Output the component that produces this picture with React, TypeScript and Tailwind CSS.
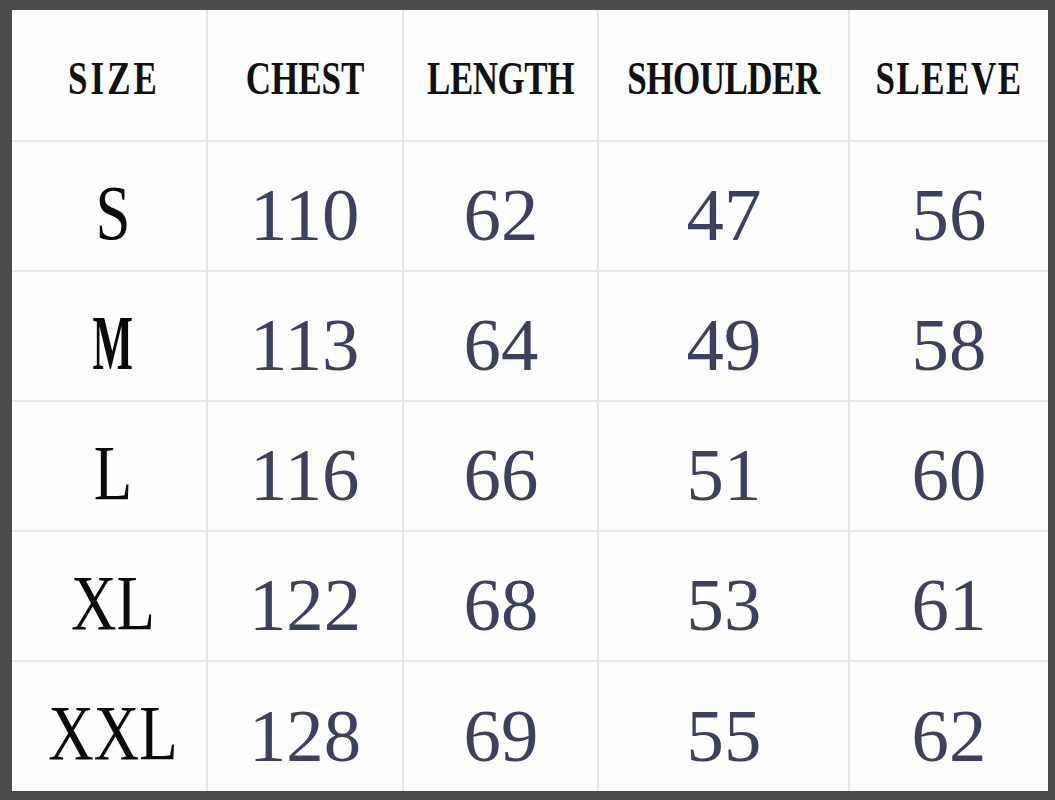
import React from 'react';

const headers: { label: string; track: string; pad: string }[] = [
  { label: 'SIZE', track: 'tracking-[3px]', pad: 'pl-[10px]' },
  { label: 'CHEST', track: 'tracking-[0px]', pad: '' },
  { label: 'LENGTH', track: 'tracking-[-0.5px]', pad: '' },
  { label: 'SHOULDER', track: 'tracking-[-0.5px]', pad: '' },
  { label: 'SLEEVE', track: 'tracking-[1.5px]', pad: '' },
];

const rows: { size: string; values: number[] }[] = [
  { size: 'S', values: [110, 62, 47, 56] },
  { size: 'M', values: [113, 64, 49, 58] },
  { size: 'L', values: [116, 66, 51, 60] },
  { size: 'XL', values: [122, 68, 53, 61] },
  { size: 'XXL', values: [128, 69, 55, 62] },
];

const serif = "font-['Liberation_Serif','Times_New_Roman',serif]";

const Cell: React.FC<{ children: React.ReactNode; className?: string }> = ({ children, className = "" }) => (
  <div className={`bg-[#fdfdfd] flex items-center justify-center leading-none ${className}`}>
    {children}
  </div>
);

export default function App() {
  return (
    <div className="w-[1055px] h-[800px] bg-[#4b4b4b] pl-[12px] pt-[10px] pr-[7px] pb-[9px]">
      <div className="w-full h-full grid grid-cols-[194px_194px_193px_249px_198px] grid-rows-[130px_128px_128px_128px_128px_129px] gap-[2px] bg-[#e7e7e7]">
        {headers.map((h) => (
          <Cell key={h.label} className={`pt-[8px] ${h.pad}`}>
            <span className={`${serif} text-[35px] font-bold text-[#111] scale-y-[1.3] ${h.track}`}>{h.label}</span>
          </Cell>
        ))}
        {rows.map((r) => (
          <React.Fragment key={r.size}>
            <Cell className="pt-[14px] pl-[8px]">
              <span
                className={`${serif} text-[63px] text-[#0a0a0a] scale-y-[1.24] ${r.size === 'M' ? 'font-bold scale-x-[0.68]' : 'font-normal'}`}
              >
                {r.size}
              </span>
            </Cell>
            {r.values.map((v, i) => (
              <Cell key={i} className="pt-[18px]">
                <span className={`${serif} text-[68px] text-[#3d415e] scale-x-[1.1] scale-y-[1.08]`}>{v}</span>
              </Cell>
            ))}
          </React.Fragment>
        ))}
      </div>
    </div>
  );
}
